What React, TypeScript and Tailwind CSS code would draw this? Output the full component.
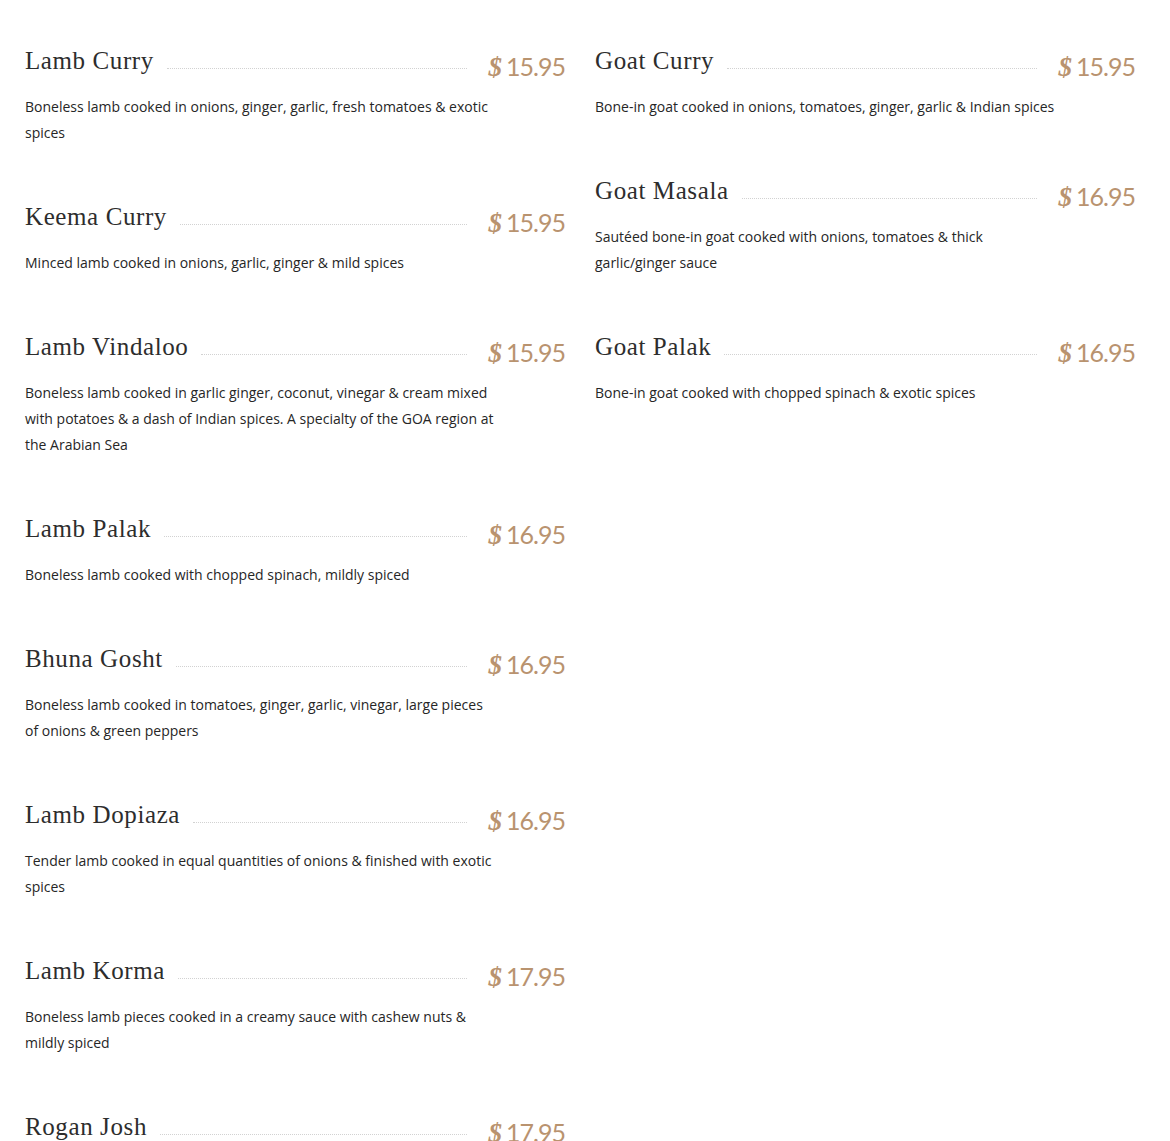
import React from "react";

type Item = { name: string; price: string; desc: string };

const left: Item[] = [
  { name: "Lamb Curry", price: "15.95", desc: "Boneless lamb cooked in onions, ginger, garlic, fresh tomatoes & exotic spices" },
  { name: "Keema Curry", price: "15.95", desc: "Minced lamb cooked in onions, garlic, ginger & mild spices" },
  { name: "Lamb Vindaloo", price: "15.95", desc: "Boneless lamb cooked in garlic ginger, coconut, vinegar & cream mixed with potatoes & a dash of Indian spices. A specialty of the GOA region at the Arabian Sea" },
  { name: "Lamb Palak", price: "16.95", desc: "Boneless lamb cooked with chopped spinach, mildly spiced" },
  { name: "Bhuna Gosht", price: "16.95", desc: "Boneless lamb cooked in tomatoes, ginger, garlic, vinegar, large pieces of onions & green peppers" },
  { name: "Lamb Dopiaza", price: "16.95", desc: "Tender lamb cooked in equal quantities of onions & finished with exotic spices" },
  { name: "Lamb Korma", price: "17.95", desc: "Boneless lamb pieces cooked in a creamy sauce with cashew nuts & mildly spiced" },
  { name: "Rogan Josh", price: "17.95", desc: "Boneless lamb cooked with yogurt, tomatoes & special spices" },
];

const right: Item[] = [
  { name: "Goat Curry", price: "15.95", desc: "Bone-in goat cooked in onions, tomatoes, ginger, garlic & Indian spices" },
  { name: "Goat Masala", price: "16.95", desc: "Sautéed bone-in goat cooked with onions, tomatoes & thick garlic/ginger sauce" },
  { name: "Goat Palak", price: "16.95", desc: "Bone-in goat cooked with chopped spinach & exotic spices" },
];

function MenuItem({ item }: { item: Item }) {
  return (
    <div className="mb-[51px]">
      <div className="flex h-[40px] items-center">
        <div className="whitespace-nowrap text-[25px] leading-[40px] tracking-[0.6px] text-[#2d2d2d] [font-family:'Liberation_Serif',serif]">
          {item.name}
        </div>
        <div className="ml-[13px] mr-[22px] mt-[14px] h-0 flex-1 border-t border-dotted border-[#d2d2d2]" />
        <div className="mt-[10px] whitespace-nowrap text-[25px] leading-[40px] tracking-[-1px] text-[#b9936f] [font-family:Lato,sans-serif]">
          <span className="mr-[5px] text-[27px] font-bold italic [font-family:'Liberation_Serif',serif]">$</span>
          {item.price}
        </div>
      </div>
      <p className="mt-[13px] w-[470px] text-[14px] leading-[26px] text-[#262626] [font-family:'Open_Sans',sans-serif]">
        {item.desc}
      </p>
    </div>
  );
}

export default function App() {
  return (
    <div className="min-h-screen bg-white">
      <div className="flex gap-[30px] pl-[25px] pr-[35px] pt-[41px]">
        <div className="w-[540px]">
          {left.map((it) => (
            <MenuItem key={it.name} item={it} />
          ))}
        </div>
        <div className="w-[540px]">
          {right.map((it) => (
            <MenuItem key={it.name} item={it} />
          ))}
        </div>
      </div>
    </div>
  );
}
